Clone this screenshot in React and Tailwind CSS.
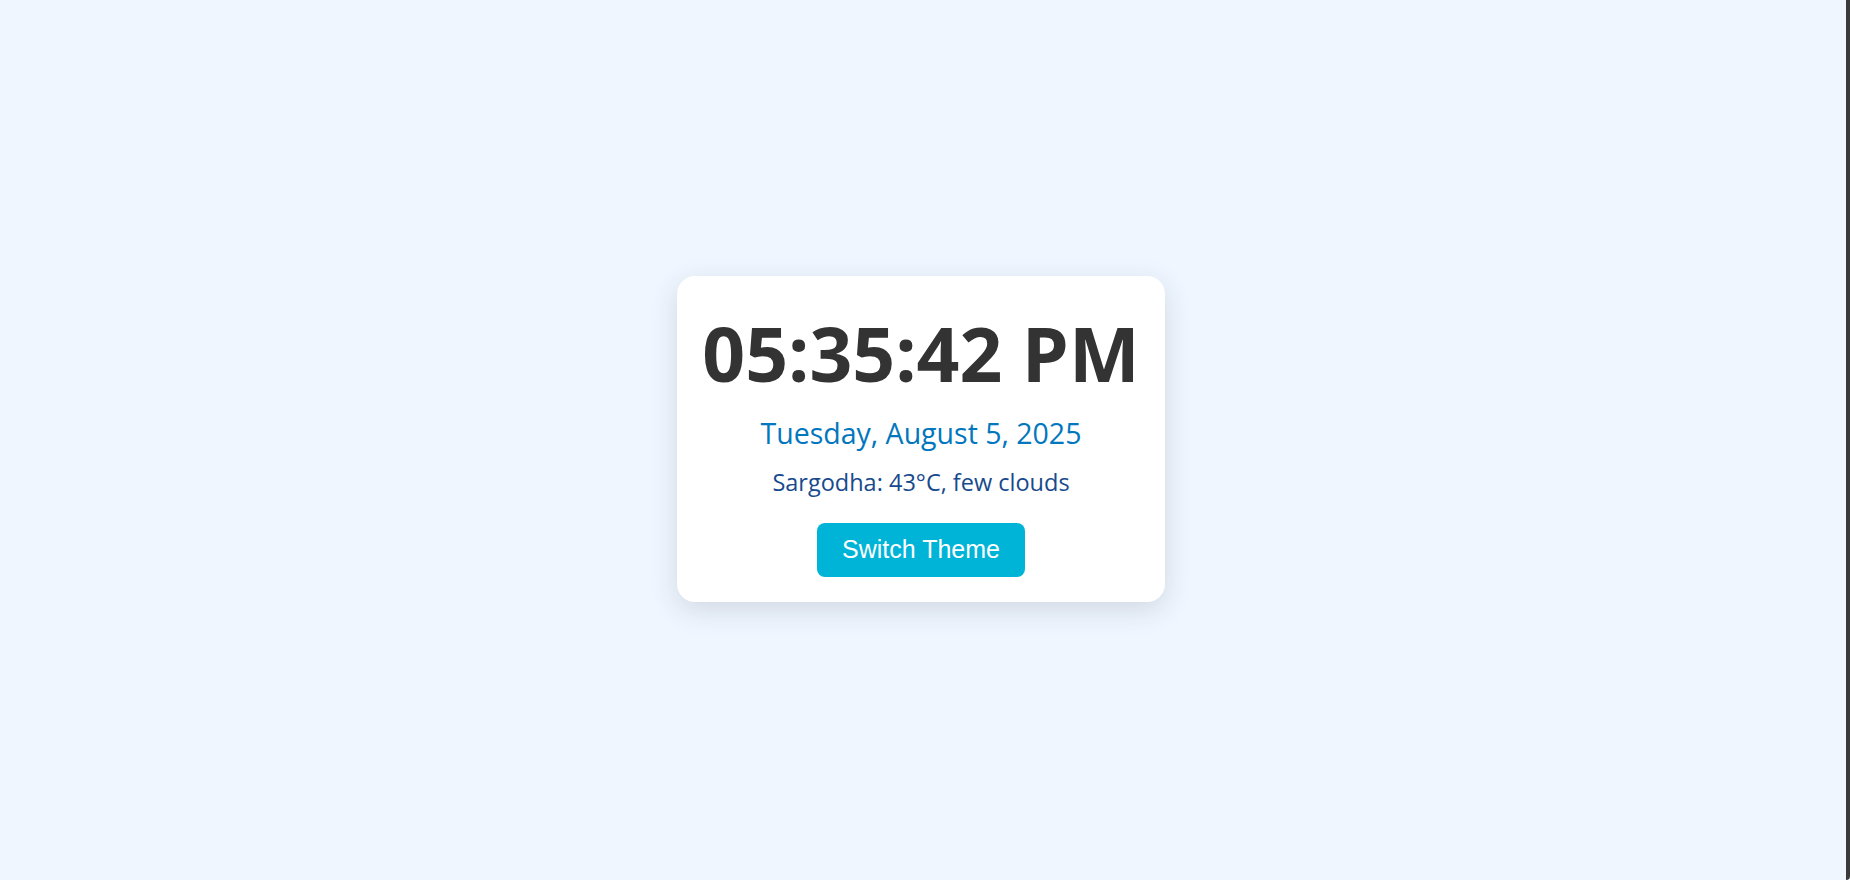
export default function App() {
  const time = '05:35:42 PM';
  const date = 'Tuesday, August 5, 2025';
  const weather = 'Sargodha: 43°C, few clouds';

  return (
    <div className="flex h-[880px] w-full bg-[#eff6ff] font-['Open_Sans',sans-serif]">
      {/* page */}
      <div className="flex flex-1 items-center justify-center pr-[4px] pb-[3px]">
        <div className="flex w-[488px] flex-col items-center rounded-[18px] bg-white pt-[40px] pb-[25px] text-center shadow-[0_8px_28px_rgba(30,41,59,0.14)]">
          <h1 className="text-[75px] font-bold leading-none text-[#333333]">{time}</h1>
          <p className="mt-[28px] text-[28.5px] leading-none text-[#0277bd]">{date}</p>
          <p className="mt-[24px] text-[23.5px] leading-none text-[#174a8c]">{weather}</p>
          <button className="mt-[28px] flex h-[54px] w-[208px] items-center justify-center rounded-[8px] bg-[#00b4d8] font-['Liberation_Sans',Arial,sans-serif] text-[25px] text-white">
            Switch Theme
          </button>
        </div>
      </div>
      {/* window edge */}
      <div className="w-[4px] rounded-br-[6px] bg-[#3a3a3a]" />
    </div>
  );
}
